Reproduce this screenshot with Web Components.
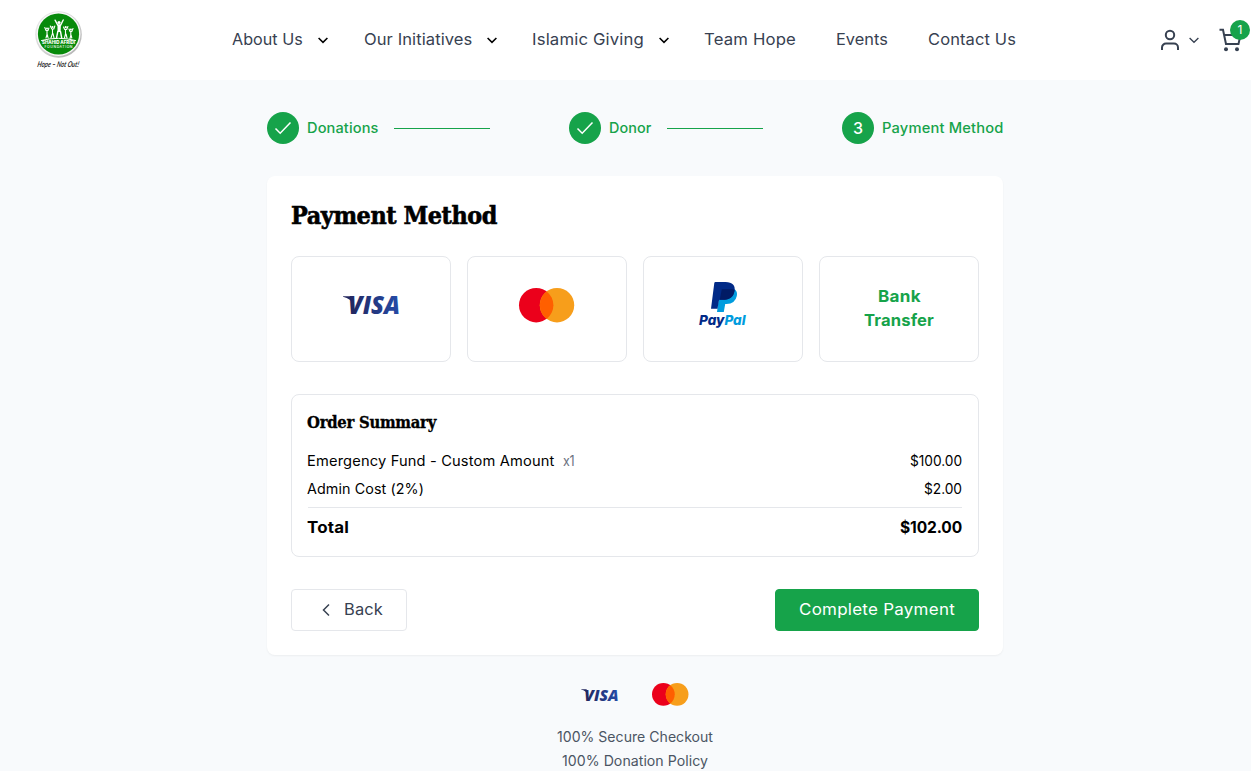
<!DOCTYPE html>
<html lang="en">
<head>
<meta charset="utf-8">
<title>Payment Method</title>
<style>
html,body{margin:0;height:771px;overflow:hidden;background:#f9fafb}
body{background:#f8fafc;font-family:Inter,"Open Sans",sans-serif;color:#000}
</style>
</head>
<body>
<donation-app></donation-app>
<script>
const define = (name, html, after) => {
  const t = document.createElement('template');
  t.innerHTML = html;
  customElements.define(name, class extends HTMLElement {
    connectedCallback() {
      if (this.shadowRoot) return;
      this.attachShadow({mode: 'open'}).append(t.content.cloneNode(true));
      if (after) after(this, this.shadowRoot);
    }
  });
};

// A single line of text that occupies the width given in "w":
// part of the difference goes to tracking, the rest to glyph width.
define('fit-text', `<style>:host{display:inline-block;white-space:nowrap;flex:none;text-align:left}span{display:inline-block;transform-origin:0 50%}</style><span><slot></slot></span>`, (el, root) => {
  const target = +el.getAttribute('w');
  const span = root.querySelector('span');
  const n = el.textContent.length;
  const extra = target - span.offsetWidth;
  span.style.letterSpacing = (extra * .3 / n) + 'px';
  span.style.transform = `scaleX(${target / span.getBoundingClientRect().width})`;
  el.style.width = target + 'px';
});

define('chevron-icon', `<style>:host{display:block;width:16px;height:16px;flex:none}svg{display:block}</style>
<svg width="16" height="16" viewBox="0 0 16 16" fill="none" stroke="currentColor"><path d="M3.600 6 8 10.300 12.400 6" style="stroke-width:var(--sw,1.6)"/></svg>`);

define('visa-logo', `<style>:host{display:block;width:56px;flex:none}svg{display:block;width:100%;overflow:visible}text{font:italic 800 24.6px "Open Sans",sans-serif}</style>
<svg viewBox="0 0 56 18"><defs><linearGradient id="g" gradientUnits="userSpaceOnUse" x1="2" y1="14" x2="54" y2="4"><stop offset="0" stop-color="#222357"/><stop offset="1" stop-color="#254aa5"/></linearGradient></defs>
<path d="M0 .3H7.3Q9 .4 9.4 2L11 9Q8 2.500 0 .8Z" fill="url(#g)"/>
<text x="5" y="17.9" textLength="52" lengthAdjust="spacingAndGlyphs" fill="url(#g)">VISA</text></svg>`);

define('mastercard-logo', `<style>:host{display:block;width:56px;flex:none}svg{display:block;width:100%;overflow:visible}</style>
<svg viewBox="0 0 56 35"><circle cx="17.200" cy="17.200" r="17.200" fill="#eb001b"/><circle cx="38" cy="17.200" r="17.200" fill="#f79e1b"/><path d="M27.600 3.500a17.200 17.200 0 0 1 0 27.400a17.200 17.200 0 0 1 0-27.400" fill="#ff5f00"/></svg>`);

define('paypal-logo', `<style>:host{display:block;flex:none}svg{display:block;overflow:visible}text{font:italic 800 13.500px Inter,sans-serif}</style>
<svg width="48" height="47" viewBox="0 0 48 47">
<path d="M21 7H35.500Q38.800 9.500 37.800 14Q36.200 21.800 27.500 22H26.200L24.800 30H18Z" fill="#009cde"/>
<path d="M16.400 0H26.500C33.500 0 36.500 3.600 35.500 9C34.400 15.700 30 17.800 23.500 17.800H20.800Q20 17.800 19.800 18.900L18.500 26.800H12L15.300 1Q15.500 0 16.400 0Z" fill="#012a87"/>
<path d="M22.800 7.200H33Q34.600 7.200 35.600 8.200C34.600 15.700 30 17.800 23.500 17.800H20.800Z" fill="#011b65"/>
<text y="43.200" textLength="46.500" lengthAdjust="spacingAndGlyphs"><tspan fill="#012a87">Pay</tspan><tspan fill="#009cde">Pal</tspan></text></svg>`);

define('foundation-logo', `<style>:host{display:block}svg{display:block;overflow:visible}</style>
<svg width="48" height="64" viewBox="0 0 48 64"><defs><linearGradient id="r" x2="1" y2="1"><stop stop-color="#eee"/><stop offset=".5" stop-color="#d4d4d4"/><stop offset="1" stop-color="#aaa"/></linearGradient></defs>
<g transform="translate(.5 2)"><circle cx="24" cy="24.500" r="23.300" fill="url(#r)"/><circle cx="24" cy="24" r="22" fill="#f7f7f7"/><circle cx="24" cy="24" r="20.600" fill="#078a0b"/>
<g fill="#fff" stroke="#fff" stroke-linecap="round"><circle cx="24.500" cy="12.500" r="1.600" stroke="none"/><path d="m20.600 10.200 2.600 4.800h3l2.500-5M24.600 16v5M23.300 21.500l-1.300 6.500M26 21.500l1.200 6.500" fill="none" stroke-width="1.400"/><path d="M23 15h3.400l-.3 7H23Z" stroke="none"/>
<g stroke-width="1.100" fill="none"><path d="m15.800 16 1.500 3h2l1-3M18 19.500v4l-1.500 4.500M18.500 23.500l1 4.500M10.300 17.500l1.200 3h2l.9-2.500M12.500 20.500v4l-1 3.500M12.800 24.500l.8 3.500M29 17l1.200 2.500h2l1.200-3M31 19.500v4.500l-1 4M31.500 24l1 4M34.500 19l1 2.500h1.800l1.200-3M36.300 21.500v4l-.8 3M36.500 25l.8 3"/></g><g stroke="none"><circle cx="18" cy="17" r="1.100"/><circle cx="12.500" cy="18.500" r="1"/><circle cx="31.200" cy="17.200" r="1.100"/><circle cx="36.400" cy="19.500" r="1"/></g><path d="M7 30.500Q24 26 41 30.500" fill="none" stroke-width="1"/></g>
<g fill="#fff" font-family="Inter,sans-serif"><text x="7.500" y="34.200" font-size="4.400" font-weight="800" textLength="33" lengthAdjust="spacingAndGlyphs">SHAHID AFRIDI</text><text x="10" y="38.300" font-size="3.500" font-weight="500" textLength="28">FOUNDATION</text></g></g>
<text transform="translate(3 58.500) skewX(-12)" font-family="Lato,sans-serif" font-style="italic" font-weight="600" font-size="8" fill="#111" textLength="41.500" lengthAdjust="spacingAndGlyphs">Hope – Not Out!</text></svg>`);

define('nav-item', `<style>:host{display:flex;align-items:center;gap:12px;color:#374151;font-size:16px;line-height:24px}:host(:not([menu])){padding-right:8px}:host(:not([menu])) chevron-icon{display:none}chevron-icon{color:#000}::slotted(fit-text){margin-top:-2px}</style><slot></slot><chevron-icon></chevron-icon>`);

define('site-header', `<style>
:host{display:flex;height:80px;background:#fff;align-items:center;color:#374151;box-sizing:border-box;padding-left:34px}
foundation-logo{margin:0 150.200px 0 0;height:64px}
nav{display:flex;gap:32px}nav nav-item:first-child{margin-right:.8px}
.tools{margin-left:auto;display:flex;align-items:center;padding-right:9px}
.tools svg{display:block}.tools chevron-icon{--sw:1.3;margin:0 16px 0 4px}
.cart{position:relative}.badge{position:absolute;left:12px;top:-8px;width:20px;height:20px;border-radius:50%;background:#16a34a;color:#fff;font-size:12px;line-height:20px;text-align:center}
</style>
<foundation-logo></foundation-logo>
<nav><nav-item menu><fit-text w="70.800">About Us</fit-text></nav-item><nav-item menu><fit-text w="108.400">Our Initiatives</fit-text></nav-item><nav-item menu><fit-text w="112">Islamic Giving</fit-text></nav-item><nav-item><fit-text w="92">Team Hope</fit-text></nav-item><nav-item><fit-text w="52">Events</fit-text></nav-item><nav-item><fit-text w="88">Contact Us</fit-text></nav-item></nav>
<div class="tools"><svg width="24" height="24" viewBox="0 0 24 24" fill="none" stroke="#374151" stroke-width="2"><circle cx="12" cy="7" r="4.200"/><path d="M4 22v-2.500a4 4 0 0 1 4-4h8a4 4 0 0 1 4 4V22"/></svg><chevron-icon></chevron-icon>
<div class="cart"><svg width="24" height="24" viewBox="0 0 24 24" fill="none" stroke="#374151" stroke-width="2"><path d="M1.500 1.800H5L8 16h12.500L22.500 7H6"/><circle cx="8" cy="21.200" r="2" fill="#374151" stroke="none"/><circle cx="19" cy="21.200" r="2" fill="#374151" stroke="none"/></svg><span class="badge">1</span></div></div>`);

define('progress-step', `<style>:host{display:flex;align-items:center;color:#16a34a;font-size:14px;line-height:20px;font-weight:500}
.dot{width:32px;height:32px;border-radius:50%;background:#16a34a;color:#fff;display:flex;align-items:center;justify-content:center;margin-right:7.500px;font-size:16px;font-weight:500}
.line{width:96px;height:1px;background:#16a34a;margin-left:16px}:host([last]) .line,:host([last]) svg,:host(:not([last])) b{display:none}b{font-weight:500}</style>
<div class="dot"><svg width="20" height="20" viewBox="0 0 20 20" fill="none" stroke="#fff" stroke-width="1.500"><path d="m2.500 10.500 4.700 4.700L17.500 4.500"/></svg><b>3</b></div><slot></slot><div class="line"></div>`);

define('method-tile', `<style>:host{box-sizing:border-box;height:106px;border:1px solid #e5e7eb;border-radius:8px;display:flex;flex-direction:column;align-items:center;justify-content:center;padding-bottom:8px;color:#16a34a;font-weight:700;font-size:16px;line-height:24px}:host([text]){padding-bottom:2px}</style><slot></slot>`);

define('summary-row', `<style>:host{display:flex;justify-content:space-between;font-size:14px;line-height:20px;margin-bottom:8px}:host([total]){border-top:1px solid #e5e7eb;padding:7px 0 1px;margin:0;font-weight:700;font-size:16px;line-height:24px}div{display:flex;gap:8px;margin-left:-.7px}::slotted([muted]){color:#6b7280}</style><div><slot></slot></div><slot name="value"></slot>`);

define('order-summary', `<style>:host{display:block;border:1px solid #e5e7eb;border-radius:8px;padding:16px;margin-top:32px}h3{font:700 15.800px/24px "DejaVu Serif",serif;-webkit-text-stroke:.35px;margin:0 0 16px -.7px;height:24px}</style>
<h3><fit-text w="129">Order Summary</fit-text></h3>
<summary-row><fit-text w="247.500">Emergency Fund - Custom Amount</fit-text><fit-text muted w="11.500">x1</fit-text><fit-text slot="value" w="52">$100.00</fit-text></summary-row>
<summary-row><fit-text w="117">Admin Cost (2%)</fit-text><fit-text slot="value" w="38">$2.00</fit-text></summary-row>
<summary-row total><fit-text w="42">Total</fit-text><fit-text slot="value" w="62">$102.00</fit-text></summary-row>`);

define('action-button', `<style>:host{display:block}button{box-sizing:border-box;height:42px;width:116px;border:1px solid #e5e7eb;border-radius:4px;background:#fff;color:#374151;font:400 16px/24px Inter,sans-serif;padding:0 0 2px;display:flex;align-items:center;justify-content:center;gap:9px}:host([primary]) button{background:#16a34a;border-color:#16a34a;color:#fff;width:204px}svg{display:block;margin:2px 0 0 3px}:host([primary]) svg{display:none}</style>
<button><svg width="16" height="16" viewBox="0 0 16 16" fill="none" stroke="currentColor" stroke-width="1.500"><path d="M10 2.500 4.500 8 10 13.500"/></svg><slot></slot></button>`);

define('payment-card', `<style>:host{display:block;box-sizing:border-box;height:479px;background:#fff;border-radius:8px;padding:24px;margin-top:32px;box-shadow:0 1px 2px rgba(0,0,0,.05)}
h2{font:700 24px/32px "DejaVu Serif",serif;-webkit-text-stroke:.6px;height:32px;margin:0 0 24px -.5px}
.grid{display:grid;grid-template-columns:repeat(4,1fr);gap:16px}.actions{display:flex;justify-content:space-between;margin-top:32px}</style>
<h2><fit-text w="206">Payment Method</fit-text></h2>
<div class="grid"><method-tile><visa-logo></visa-logo></method-tile><method-tile><mastercard-logo></mastercard-logo></method-tile><method-tile><paypal-logo></paypal-logo></method-tile><method-tile text><fit-text w="43">Bank</fit-text><fit-text w="70">Transfer</fit-text></method-tile></div>
<order-summary></order-summary>
<div class="actions"><action-button><fit-text w="39">Back</fit-text></action-button><action-button primary><fit-text w="156">Complete Payment</fit-text></action-button></div>`);

define('trust-footer', `<style>:host{display:flex;flex-direction:column;align-items:center;margin-top:24px;color:#4b5563;font-size:14px;line-height:24px}.logos{height:32px;display:flex;align-items:center;gap:34px;margin-bottom:14px}.logos>*{width:37px}</style>
<div class="logos"><visa-logo></visa-logo><mastercard-logo></mastercard-logo></div><fit-text w="156">100% Secure Checkout</fit-text><fit-text w="146">100% Donation Policy</fit-text>`);

define('donation-app', `<style>:host{display:block}main{width:736px;margin:32px 0 0 267px}.steps{display:flex;justify-content:space-between}</style>
<site-header></site-header>
<main><div class="steps"><progress-step><fit-text w="71.500">Donations</fit-text></progress-step><progress-step><fit-text w="42.500">Donor</fit-text></progress-step><progress-step last><fit-text w="121.500">Payment Method</fit-text></progress-step></div>
<payment-card></payment-card><trust-footer></trust-footer></main>`);
</script>
</body>
</html>
